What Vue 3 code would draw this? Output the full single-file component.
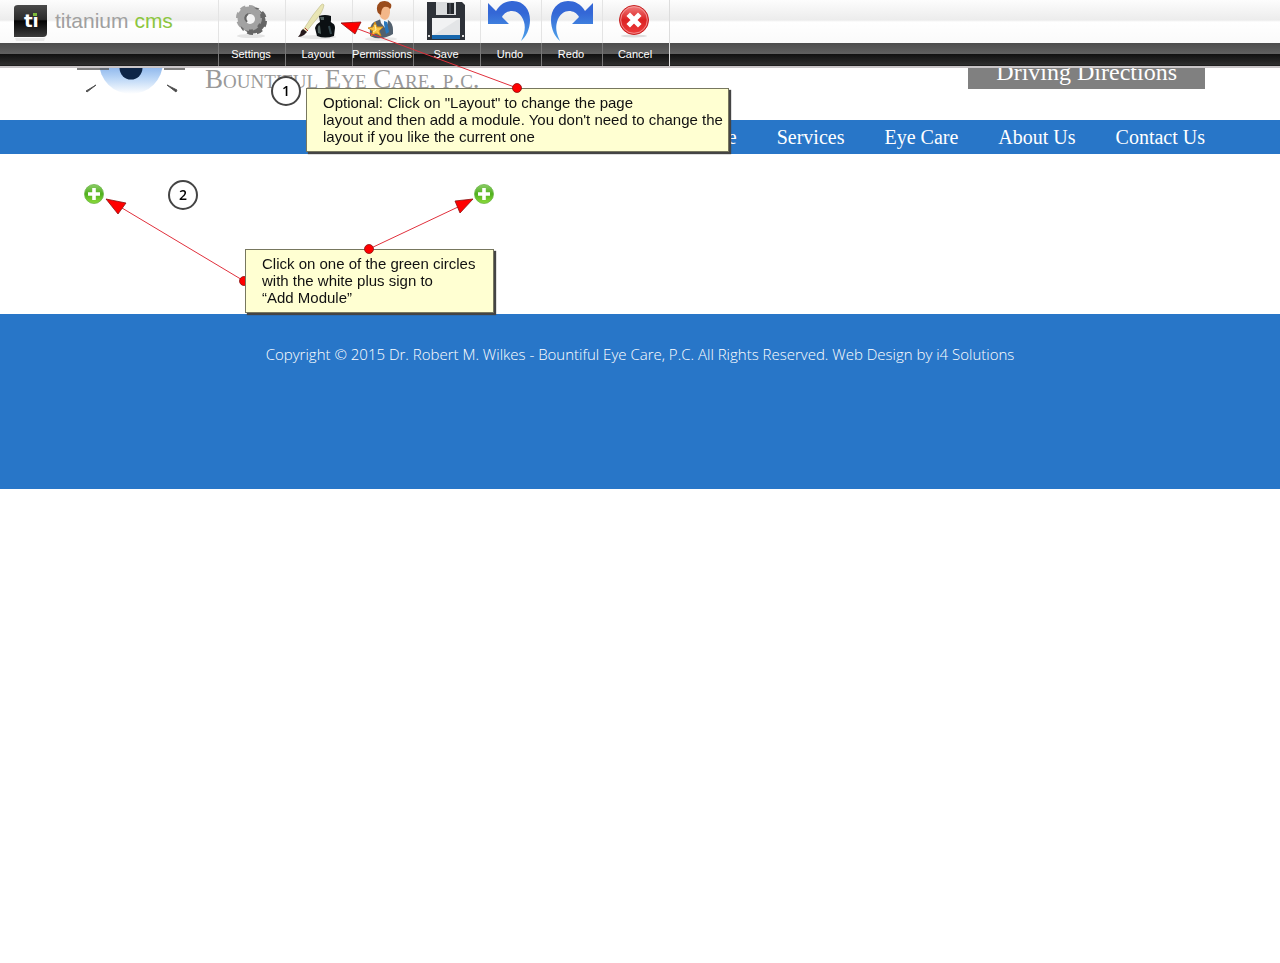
<template>
    <div class="page">
        <div class="toolbar">
            <a href="#" class="brand">
                <svg class="brand-mark" width="34" height="38" viewBox="0 0 34 38">
                    <defs>
                        <linearGradient id="markFill" x1="0" y1="0" x2="0" y2="1">
                            <stop offset="0" stop-color="#4a4a4a" />
                            <stop offset="0.45" stop-color="#2b2b2b" />
                            <stop offset="0.5" stop-color="#050505" />
                            <stop offset="1" stop-color="#3c3c3c" />
                        </linearGradient>
                    </defs>
                    <path d="M0 3Q0 0 4 0H33V28Q33 32 29 32H0Z" fill="url(#markFill)" />
                    <text x="10" y="22" font-family="DejaVu Sans, sans-serif" font-weight="bold" font-size="18" fill="#fff">tı</text>
                    <rect x="19" y="8" width="4" height="3" fill="#7dbb3a" />
                    <path d="M1 33H31L30 36H2Z" fill="#ddd" opacity="0.6" />
                </svg>
                <span class="brand-name">titanium <em>cms</em></span>
            </a>
            <div class="tools">
                <button v-for="tool in tools" :key="tool" type="button" class="tool">
                    <svg width="48" height="43" viewBox="0 0 48 43">
                        <g v-if="tool === 'Settings'">
                            <ellipse cx="24" cy="36" rx="14" ry="2" fill="#e4e4e4" />
                            <g fill="none" stroke="#666">
                                <circle cx="26" cy="21" r="9" stroke-width="7" />
                                <circle cx="26" cy="21" r="12" stroke-width="4" pathLength="16" stroke-dasharray="1.2 0.8" />
                            </g>
                            <g fill="none" stroke="#a2a2a2">
                                <circle cx="22" cy="18" r="8" stroke-width="7" />
                                <circle cx="22" cy="18" r="11" stroke-width="4" pathLength="16" stroke-dasharray="1.2 0.8" />
                            </g>
                            <circle cx="23" cy="19" r="5" fill="#f4f4f4" />
                            <path d="M21 14a5 5 0 0 0-1 8" fill="none" stroke="#666" stroke-width="2" />
                        </g>
                        <g v-else-if="tool === 'Layout'">
                            <ellipse cx="24" cy="37" rx="18" ry="2" fill="#e6e6e6" />
                            <path d="M27 5Q29 3 30 5Q29 12 21 21L12 32L9 30L19 15Z" fill="#e9e6b5" stroke="#bdb985" stroke-width="0.6" />
                            <path d="M9 29L13 32L10 35Q7 37 4 37Q7 34 7 31Z" fill="#26191b" />
                            <path d="M11 28L14 31" stroke="#a33" stroke-width="1" />
                            <path d="M25 16Q31 14 37 16V20Q36 22 38 23Q41 24 41 28L40 36Q31 39 23 36L21 28Q22 24 26 22Z" fill="#0b1013" />
                            <path d="M26 17H30V20H27M25 25Q23 27 24 33L27 34L26 26Z" fill="#50605f" />
                            <path d="M35 26L37 34" stroke="#33464c" stroke-width="2" />
                        </g>
                        <g v-else-if="tool === 'Permissions'">
                            <ellipse cx="23" cy="39" rx="16" ry="2" fill="#e8e8e8" />
                            <path d="M12 36Q11 25 16 22L23 19L30 20Q35 23 35 30V34Q28 39 17 38Z" fill="#53616f" />
                            <path d="M22 19L29 18L30 21L28 29L23 23Z" fill="#f4f7fa" />
                            <path d="M26 21L29 22L31 32L28 34L26 24Z" fill="#2877bd" />
                            <path d="M21 6Q26 1 32 6V13Q31 19 27 20Q22 19 21 13Z" fill="#f3b789" />
                            <path d="M20 13Q17 6 22 2Q29-1 33 4Q34 7 32 9Q30 6 26 7Q23 9 23 15Z" fill="#9a4c1c" />
                            <path d="M17 22L19 27L25 27L21 31L23 36L18 33L13 36L15 31L10 28L15 27Z" fill="#f8c545" stroke="#d18a18" />
                            <path d="M17 25L18 30L15 32" fill="none" stroke="#fff0a8" />
                        </g>
                        <g v-else-if="tool === 'Save'">
                            <path d="M5 2H40L43 5V40H5Z" fill="#2d3138" />
                            <path d="M14 2H34V15H14Z" fill="#d9dbdd" />
                            <path d="M25 3H32V14H25Z" fill="#24272c" />
                            <path d="M27 3H29V14H27Z" fill="#41454c" />
                            <path d="M10 18H38V36H10Z" fill="#f1f2f3" />
                            <path d="M10 36L38 18V36Z" fill="#e3e5e7" />
                            <path d="M10 35H38V39H10Z" fill="#1767ad" />
                            <path d="M6 35H8V37H6ZM40 35H42V37H40Z" fill="#ddd" />
                        </g>
                        <g v-else-if="tool === 'Undo' || tool === 'Redo'" :transform="tool === 'Redo' ? 'translate(48 0) scale(-1 1)' : null">
                            <linearGradient :id="'turn' + tool" x1="0" y1="0" x2="0" y2="1">
                                <stop offset="0.3" stop-color="#3467d6" />
                                <stop offset="1" stop-color="#4fa3ea" />
                            </linearGradient>
                            <path d="M2 3L10 11C14 4 20 1 27 1C38 1 44 10 44 20C44 29 40 37 35 41C39 33 39.5 27 38 22C36 14 30 11 26 11C22 11 18 13 16 17L23 24H2Z" :fill="`url(#turn${tool})`" />
                        </g>
                        <g v-else>
                            <ellipse cx="23" cy="36" rx="13" ry="1.5" fill="#ddd" />
                            <linearGradient id="stopFill" x1="0" y1="0" x2="0" y2="1">
                                <stop offset="0" stop-color="#f28080" />
                                <stop offset="0.5" stop-color="#dc2222" />
                                <stop offset="1" stop-color="#ee3d3d" />
                            </linearGradient>
                            <circle cx="23" cy="20" r="14.5" fill="url(#stopFill)" stroke="#c52222" />
                            <circle cx="23" cy="20" r="13.3" fill="none" stroke="#f5a3a3" stroke-width="0.8" />
                            <path d="M19 16L27 24M27 16L19 24" stroke="#fff" stroke-width="5" stroke-linecap="square" />
                        </g>
                    </svg>
                    <span>{{ tool }}</span>
                </button>
            </div>
        </div>

        <header class="header">
            <div class="container header-row">
                <a href="#" class="site-logo">
                    <svg width="112" height="60" viewBox="0 0 112 60">
                        <defs>
                            <linearGradient id="iris" x1="0" y1="0" x2="0" y2="1">
                                <stop offset="0.5" stop-color="#7caae8" />
                                <stop offset="0.75" stop-color="#b9d5f6" />
                                <stop offset="1" stop-color="#fff" />
                            </linearGradient>
                        </defs>
                        <circle cx="56" cy="28" r="32" fill="url(#iris)" />
                        <circle cx="56" cy="34" r="11.5" fill="#0d2547" />
                        <path d="M2 35H34M89 35H110" stroke="#555" stroke-width="1.6" />
                        <path d="M11 57L21 51L12 58ZM92 51L102 56L101 58Z" fill="#444" stroke="#555" />
                    </svg>
                    <span class="site-name">Bountiful Eye Care, p.c.</span>
                </a>
                <a href="#" class="directions">Driving Directions</a>
            </div>
        </header>

        <nav class="nav">
            <div class="container nav-row">
                <a v-for="link in links" :key="link" href="#">{{ link }}</a>
            </div>
        </nav>

        <main class="container columns">
            <div v-for="n in 2" :key="n" class="column">
                <button type="button" class="add" aria-label="Add Module">
                    <svg width="20" height="20" viewBox="0 0 20 20">
                        <linearGradient :id="'add' + n" x1="0" y1="0" x2="0" y2="1">
                            <stop offset="0" stop-color="#8ccc68" />
                            <stop offset="0.5" stop-color="#4fb01c" />
                            <stop offset="1" stop-color="#8edb3c" />
                        </linearGradient>
                        <circle cx="10" cy="10" r="9.5" :fill="`url(#add${n})`" stroke="#69b545" stroke-width="0.8" />
                        <path d="M10 4V16M4 10H16" stroke="#fff" stroke-width="3.6" />
                    </svg>
                </button>
            </div>
        </main>

        <footer class="footer">
            Copyright © 2015 Dr. Robert M. Wilkes - Bountiful Eye Care, P.C. All Rights Reserved. Web Design by i4 Solutions
        </footer>

        <!-- help notes lie over the page -->
        <svg class="arrows" width="740" height="320" viewBox="0 0 740 320">
            <path d="M244 281L122 208" stroke="#e0303c" />
            <path d="M106 199L126 203L118 214Z" fill="#f00" stroke="#8a1010" stroke-width="0.8" />
            <circle cx="244" cy="281" r="4.5" fill="#f00" stroke="#8a1010" stroke-width="0.8" />
        </svg>
        <div class="note note-layout">
            Optional: Click on "Layout" to change the page<br />
            layout and then add a module. You don't need to change the<br />
            layout if you like the current one
        </div>
        <div class="note note-module">
            Click on one of the green circles<br />
            with the white plus sign to<br />
            “Add Module”
        </div>
        <svg class="arrows" width="740" height="320" viewBox="0 0 740 320">
            <g stroke="#e0303c">
                <path d="M517 88L358 29" />
                <path d="M369 249L458 207" />
            </g>
            <g fill="#f00" stroke="#8a1010" stroke-width="0.8">
                <path d="M341 23L361 22L355 34Z" />
                <path d="M473 199L455 201L460 213Z" />
                <circle cx="517" cy="88" r="4.5" />
                <circle cx="369" cy="249" r="4.5" />
            </g>
        </svg>
        <span class="step step-one">1</span>
        <span class="step step-two">2</span>
    </div>
</template>

<script setup>
const tools = ['Settings', 'Layout', 'Permissions', 'Save', 'Undo', 'Redo', 'Cancel'];
const links = ['Home', 'Services', 'Eye Care', 'About Us', 'Contact Us'];
</script>

<style>
body {
    margin: 0;
    background: #fff;
}
</style>

<style scoped>
.page {
    position: relative;
}

a {
    color: inherit;
    text-decoration: none;
}

button {
    padding: 0;
    border: none;
    background: none;
    cursor: pointer;
}

svg {
    display: block;
}

.container {
    box-sizing: border-box;
    max-width: 1130px;
    margin: 0 auto;
}

.toolbar {
    position: fixed;
    top: 0;
    left: 0;
    right: 0;
    z-index: 1;
    display: flex;
    height: 66px;
    border-bottom: 2px solid #c9c5c7;
    background: linear-gradient(#fdfdfd 0, #ececec 20px, #fff 22px, #fafafa 43px, #4c4c4c 43px, #606060 54px, #101010 54px, #2e2e2e 65px, #111 66px);
}

.brand {
    display: flex;
    box-sizing: border-box;
    width: 218px;
    padding: 5px 0 0 14px;
    gap: 7px;
}

.brand-name {
    font: 21px/32px "Liberation Sans", Arial, sans-serif;
    color: #a0a0a0;
    white-space: nowrap;
}

.brand-name em {
    font-style: normal;
    color: #8cc63f;
}

.tools {
    display: grid;
    grid-template-columns: 67px 67px 61px 67px 61px 61px 67px;
    border-right: 1px solid #ddd;
}

.tool {
    display: flex;
    flex-direction: column;
    align-items: center;
    box-sizing: border-box;
    padding-right: 2px;
    border-style: solid;
    border-image: linear-gradient(#e4e4e4 43px, #777 43px) 1;
    border-width: 0 0 0 1px;
}

.tool span {
    font: 11px/23px "Liberation Sans", Arial, sans-serif;
    color: #fff;
}

.header-row {
    display: flex;
    justify-content: space-between;
    align-items: flex-end;
    height: 120px;
    padding-bottom: 26px;
}

.site-logo {
    display: flex;
    align-items: flex-end;
    gap: 18px;
}

.site-name {
    font: 27px/30px "Liberation Serif", serif;
    font-variant: small-caps;
    color: #999;
}

.directions {
    margin-bottom: 5px;
    padding: 0 28px;
    background: #808080;
    font: 24px/34px "Liberation Serif", serif;
    color: #fff;
}

.nav {
    background: #2876c8;
}

.nav-row {
    display: flex;
    justify-content: flex-end;
    gap: 40px;
    font: 20px/34px "Liberation Serif", serif;
    color: #fff;
}

.columns {
    display: grid;
    grid-template-columns: repeat(3, 1fr);
    gap: 40px;
    padding: 30px 0 110px;
}

.column {
    padding-left: 9px;
}

.add {
    display: block;
}

.footer {
    padding: 30px 20px 125px;
    background: #2876c8;
    font: 300 15px/20px "Open Sans", sans-serif;
    text-align: center;
    color: #fff;
}

.arrows {
    position: absolute;
    top: 0;
    left: 0;
    z-index: 2;
    pointer-events: none;
}

.note {
    position: absolute;
    z-index: 2;
    box-sizing: border-box;
    padding: 5px 16px 6px;
    border: 1px solid #77775f;
    background: #ffffd2;
    box-shadow: 2px 2px 1px #444;
    font: 15px/17px "Liberation Sans", Arial, sans-serif;
    color: #111;
    white-space: nowrap;
}

.note-layout {
    top: 88px;
    left: 306px;
    width: 423px;
}

.note-module {
    top: 249px;
    left: 245px;
    width: 249px;
}

.step {
    position: absolute;
    z-index: 2;
    box-sizing: border-box;
    width: 30px;
    height: 30px;
    border: 2px solid #444;
    border-radius: 50%;
    background: #fff;
    font: 600 14px/26px "Open Sans", sans-serif;
    text-align: center;
    color: #000;
}

.step-one {
    top: 76px;
    left: 271px;
}

.step-two {
    top: 180px;
    left: 168px;
}
</style>
